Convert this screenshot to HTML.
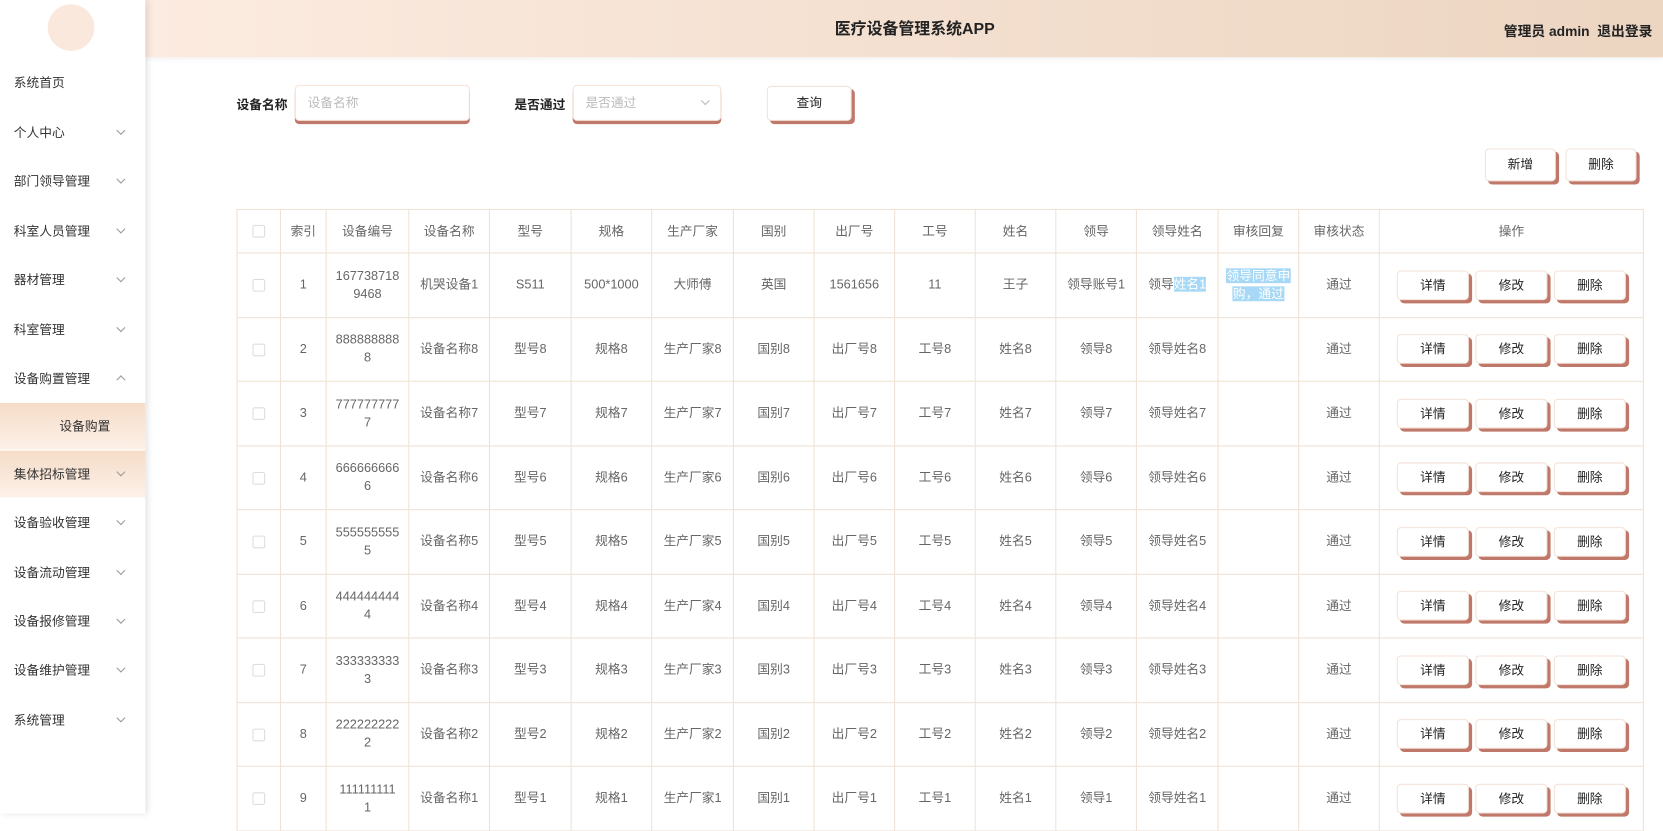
<!DOCTYPE html>
<html><head><meta charset="utf-8"><style>
*{margin:0;padding:0;box-sizing:border-box}
body{width:1663px;height:813px;overflow:hidden;background:#fff;font-family:"Liberation Sans","Noto Sans CJK SC",sans-serif;font-size:12px;color:#333}
#w{position:absolute;left:0;top:0;width:1568px;height:767px;transform:scale(1.06059);transform-origin:0 0}
.side{position:absolute;left:0;top:0;width:137px;height:767px;background:#fff;box-shadow:2px 0 6px rgba(0,0,0,.12);z-index:3}
.avatar{position:absolute;left:45px;top:4px;width:44px;height:44px;border-radius:50%;background:#fbe8dc}
.mi{position:absolute;left:0;width:137px;height:44px;line-height:44px;padding-left:13px;font-size:12px;color:#333}
.mi .ar{position:absolute;left:111px;top:17px;width:6px;height:6px;border-right:1px solid #999;border-bottom:1px solid #999;transform:rotate(45deg)}
.mi .up{transform:rotate(-135deg);top:20px}
.hl{background:linear-gradient(#f5dcc8,#fdf1e8)}
.top{position:absolute;left:137px;top:0;width:1431px;height:54px;background:linear-gradient(90deg,#fcebe0,#ecd5c1);box-shadow:0 2px 4px rgba(0,0,0,.05)}
.title{position:absolute;left:0;width:1451px;text-align:center;top:16px;font-size:15px;font-weight:bold;color:#222}
.user{position:absolute;right:10px;top:19px;font-size:13px;font-weight:bold;color:#222}
.lbl{position:absolute;font-size:12px;font-weight:bold;color:#222}
.inp{position:absolute;height:34px;background:#fff;border:1px solid #f5e3d8;border-radius:4px;box-shadow:0 3px 0 #c0786a;color:#bbb;font-size:12px;line-height:32px;padding-left:11px}
.btn{position:absolute;background:#fff;border:1px solid #f3e2d8;border-radius:4px;box-shadow:3px 3px 0 #c0786a;text-align:center;font-size:12px;color:#222}
table{position:absolute;left:223px;top:197px;border-collapse:collapse;table-layout:fixed;width:1326px}
td,th{border:1px solid #efe2d4;text-align:center;color:#666;font-size:12px;font-weight:normal;line-height:17px}
th{height:41px;color:#666}
td{height:60.5px}
.cb{display:inline-block;width:12px;height:12px;border:1px solid #ddd;border-radius:2px;background:#fff;vertical-align:middle}
.ob{display:inline-block;width:68px;height:28px;line-height:26px;margin:0 3px;background:#fff;border:1px solid #f3e2d8;border-radius:4px;box-shadow:3px 3px 0 #c0786a;color:#222;vertical-align:middle}
.sel{background:#a7d8f5;color:#fff}
</style></head><body><div id="w">
<div class="side">
<div class="avatar"></div>
<div class="mi" style="top:56px">系统首页</div>
<div class="mi" style="top:103px">个人中心<i class="ar"></i></div>
<div class="mi" style="top:149px">部门领导管理<i class="ar"></i></div>
<div class="mi" style="top:196px">科室人员管理<i class="ar"></i></div>
<div class="mi" style="top:242px">器材管理<i class="ar"></i></div>
<div class="mi" style="top:289px">科室管理<i class="ar"></i></div>
<div class="mi" style="top:335px">设备购置管理<i class="ar up"></i></div>
<div class="mi hl" style="top:380px;padding-left:56px">设备购置</div>
<div class="mi hl" style="top:425px">集体招标管理<i class="ar"></i></div>
<div class="mi" style="top:471px">设备验收管理<i class="ar"></i></div>
<div class="mi" style="top:518px">设备流动管理<i class="ar"></i></div>
<div class="mi" style="top:564px">设备报修管理<i class="ar"></i></div>
<div class="mi" style="top:610px">设备维护管理<i class="ar"></i></div>
<div class="mi" style="top:657px">系统管理<i class="ar"></i></div>
</div>
<div class="top"><div class="title">医疗设备管理系统APP</div><div class="user">管理员 admin &nbsp;退出登录</div></div>
<div class="lbl" style="left:223px;top:90px">设备名称</div>
<div class="inp" style="left:278px;top:80px;width:165px">设备名称</div>
<div class="lbl" style="left:485px;top:90px">是否通过</div>
<div class="inp" style="left:540px;top:80px;width:140px">是否通过<i style="position:absolute;left:121px;top:11px;width:6px;height:6px;border-right:1px solid #bbb;border-bottom:1px solid #bbb;transform:rotate(45deg)"></i></div>
<div class="btn" style="left:723px;top:81px;width:80px;height:33px;line-height:31px">查询</div>
<div class="btn" style="left:1400px;top:140px;width:67px;height:31px;line-height:29px">新增</div>
<div class="btn" style="left:1476px;top:140px;width:67px;height:31px;line-height:29px">删除</div>
<table>
<colgroup><col style="width:41px"><col style="width:43px"><col style="width:78px"><col style="width:76px"><col style="width:77px"><col style="width:76px"><col style="width:77px"><col style="width:76px"><col style="width:76px"><col style="width:76px"><col style="width:76px"><col style="width:76px"><col style="width:77px"><col style="width:76px"><col style="width:76px"><col style="width:249px"></colgroup>
<tr><th><span class="cb"></span></th><th>索引</th><th>设备编号</th><th>设备名称</th><th>型号</th><th>规格</th><th>生产厂家</th><th>国别</th><th>出厂号</th><th>工号</th><th>姓名</th><th>领导</th><th>领导姓名</th><th>审核回复</th><th>审核状态</th><th>操作</th></tr>
<tr><td><span class="cb"></span></td><td>1</td><td>167738718<br>9468</td><td>机哭设备1</td><td>S511</td><td>500*1000</td><td>大师傅</td><td>英国</td><td>1561656</td><td>11</td><td>王子</td><td>领导账号1</td><td>领导<span class="sel">姓名1</span></td><td><span class="sel">领导同意申<br>购，通过</span></td><td>通过</td><td><span class="ob">详情</span><span class="ob">修改</span><span class="ob">删除</span></td></tr>
<tr><td><span class="cb"></span></td><td>2</td><td>888888888<br>8</td><td>设备名称8</td><td>型号8</td><td>规格8</td><td>生产厂家8</td><td>国别8</td><td>出厂号8</td><td>工号8</td><td>姓名8</td><td>领导8</td><td>领导姓名8</td><td></td><td>通过</td><td><span class="ob">详情</span><span class="ob">修改</span><span class="ob">删除</span></td></tr>
<tr><td><span class="cb"></span></td><td>3</td><td>777777777<br>7</td><td>设备名称7</td><td>型号7</td><td>规格7</td><td>生产厂家7</td><td>国别7</td><td>出厂号7</td><td>工号7</td><td>姓名7</td><td>领导7</td><td>领导姓名7</td><td></td><td>通过</td><td><span class="ob">详情</span><span class="ob">修改</span><span class="ob">删除</span></td></tr>
<tr><td><span class="cb"></span></td><td>4</td><td>666666666<br>6</td><td>设备名称6</td><td>型号6</td><td>规格6</td><td>生产厂家6</td><td>国别6</td><td>出厂号6</td><td>工号6</td><td>姓名6</td><td>领导6</td><td>领导姓名6</td><td></td><td>通过</td><td><span class="ob">详情</span><span class="ob">修改</span><span class="ob">删除</span></td></tr>
<tr><td><span class="cb"></span></td><td>5</td><td>555555555<br>5</td><td>设备名称5</td><td>型号5</td><td>规格5</td><td>生产厂家5</td><td>国别5</td><td>出厂号5</td><td>工号5</td><td>姓名5</td><td>领导5</td><td>领导姓名5</td><td></td><td>通过</td><td><span class="ob">详情</span><span class="ob">修改</span><span class="ob">删除</span></td></tr>
<tr><td><span class="cb"></span></td><td>6</td><td>444444444<br>4</td><td>设备名称4</td><td>型号4</td><td>规格4</td><td>生产厂家4</td><td>国别4</td><td>出厂号4</td><td>工号4</td><td>姓名4</td><td>领导4</td><td>领导姓名4</td><td></td><td>通过</td><td><span class="ob">详情</span><span class="ob">修改</span><span class="ob">删除</span></td></tr>
<tr><td><span class="cb"></span></td><td>7</td><td>333333333<br>3</td><td>设备名称3</td><td>型号3</td><td>规格3</td><td>生产厂家3</td><td>国别3</td><td>出厂号3</td><td>工号3</td><td>姓名3</td><td>领导3</td><td>领导姓名3</td><td></td><td>通过</td><td><span class="ob">详情</span><span class="ob">修改</span><span class="ob">删除</span></td></tr>
<tr><td><span class="cb"></span></td><td>8</td><td>222222222<br>2</td><td>设备名称2</td><td>型号2</td><td>规格2</td><td>生产厂家2</td><td>国别2</td><td>出厂号2</td><td>工号2</td><td>姓名2</td><td>领导2</td><td>领导姓名2</td><td></td><td>通过</td><td><span class="ob">详情</span><span class="ob">修改</span><span class="ob">删除</span></td></tr>
<tr><td><span class="cb"></span></td><td>9</td><td>111111111<br>1</td><td>设备名称1</td><td>型号1</td><td>规格1</td><td>生产厂家1</td><td>国别1</td><td>出厂号1</td><td>工号1</td><td>姓名1</td><td>领导1</td><td>领导姓名1</td><td></td><td>通过</td><td><span class="ob">详情</span><span class="ob">修改</span><span class="ob">删除</span></td></tr>
</table>
</div></body></html>
